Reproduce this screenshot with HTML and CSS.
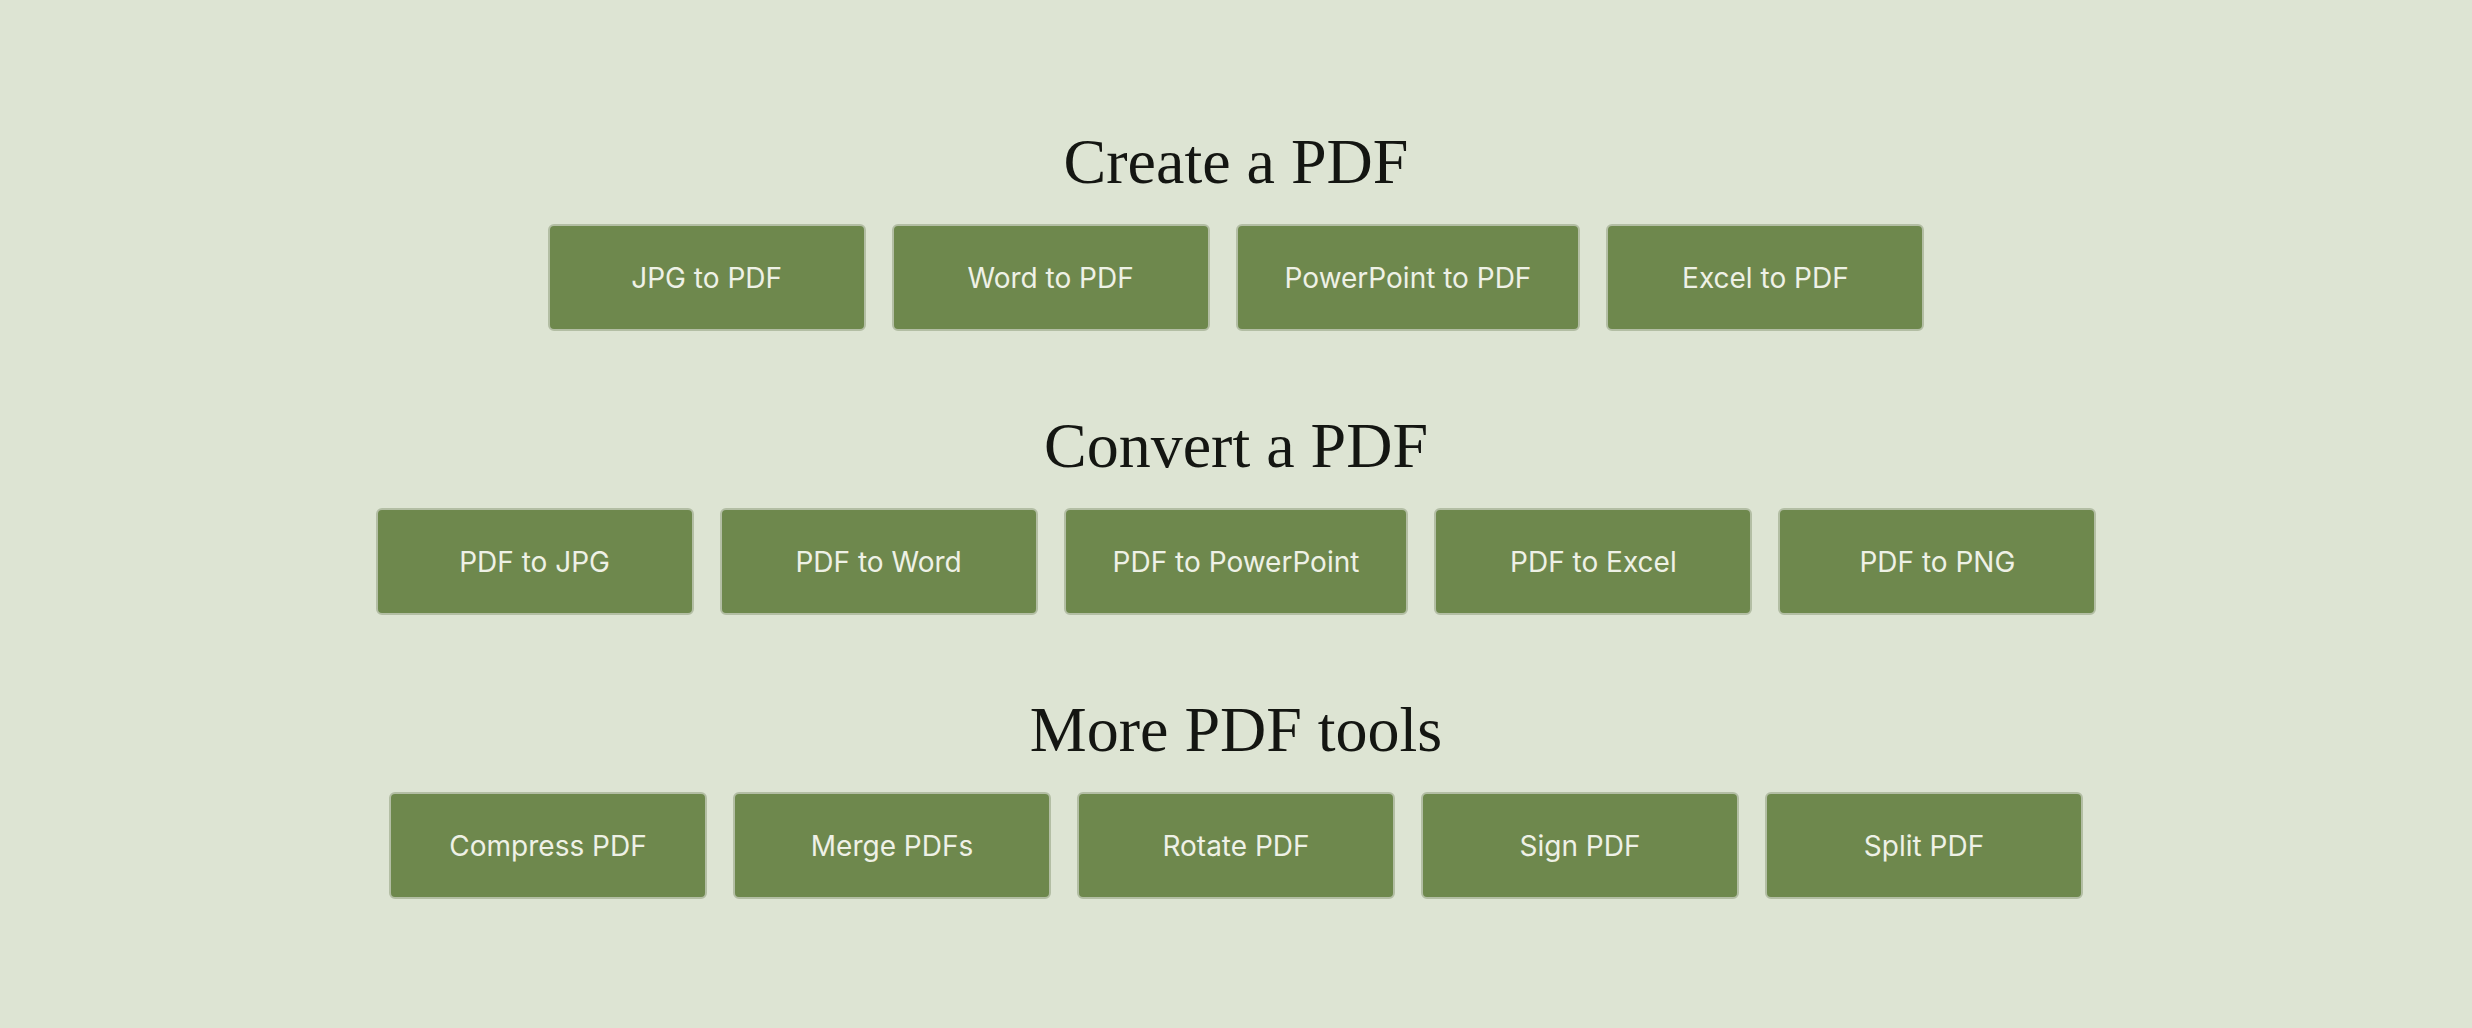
FILE: index.html
```html
<!DOCTYPE html>
<html lang="en">
<head>
  <meta charset="UTF-8">
  <meta name="viewport" content="width=device-width, initial-scale=1.0">
  <title>PDF tools</title>
  <link rel="stylesheet" href="styles.css">
</head>
<body>
  <main class="tools">
    <!-- 만들기 -->
    <section class="tool-group">
      <h2>Create a PDF</h2>
      <div class="tool-row">
        <a class="tool-btn" href="#">JPG to PDF</a>
        <a class="tool-btn" href="#">Word to PDF</a>
        <a class="tool-btn" href="#">PowerPoint to PDF</a>
        <a class="tool-btn" href="#">Excel to PDF</a>
      </div>
    </section>

    <!-- 변환 -->
    <section class="tool-group">
      <h2>Convert a PDF</h2>
      <div class="tool-row">
        <a class="tool-btn" href="#">PDF to JPG</a>
        <a class="tool-btn" href="#">PDF to Word</a>
        <a class="tool-btn" href="#">PDF to PowerPoint</a>
        <a class="tool-btn" href="#">PDF to Excel</a>
        <a class="tool-btn" href="#">PDF to PNG</a>
      </div>
    </section>

    <!-- 기타 -->
    <section class="tool-group">
      <h2>More PDF tools</h2>
      <div class="tool-row">
        <a class="tool-btn" href="#">Compress PDF</a>
        <a class="tool-btn" href="#">Merge PDFs</a>
        <a class="tool-btn" href="#">Rotate PDF</a>
        <a class="tool-btn" href="#">Sign PDF</a>
        <a class="tool-btn" href="#">Split PDF</a>
      </div>
    </section>
  </main>
</body>
</html>
```

FILE: styles.css
```css
/* 전체 배경 */
body {
  margin: 0;
  background-color: #dde4d3;
  font-family: Inter, "Noto Sans", sans-serif;
  color: #111;
}

/* 섹션들을 세로로 나열 */
.tools {
  display: flex;
  flex-direction: column;
  align-items: center;
  gap: 83px;
  padding-top: 130px;
}

.tool-group {
  display: flex;
  flex-direction: column;
  align-items: center;
}

.tool-group h2 {
  margin: 0 0 30px;
  font-family: "Liberation Serif", serif;
  font-weight: normal;
  font-size: 64px;
  line-height: 64px;
  color: #141612;
}

/* 버튼 줄 */
.tool-row {
  display: flex;
  justify-content: center;
  gap: 26px;
}

.tool-btn {
  box-sizing: border-box;
  display: flex;
  align-items: center;
  justify-content: center;
  min-width: 318px;
  height: 107px;
  padding: 0 47px;
  background-color: #6e884d;
  border: 2px solid #b3bea4;
  border-radius: 6px;
  color: #eef1e6;
  font-size: 28px;
  text-decoration: none;
  white-space: nowrap;
}

.tool-btn:hover {
  background-color: #5e7740;
}
```
